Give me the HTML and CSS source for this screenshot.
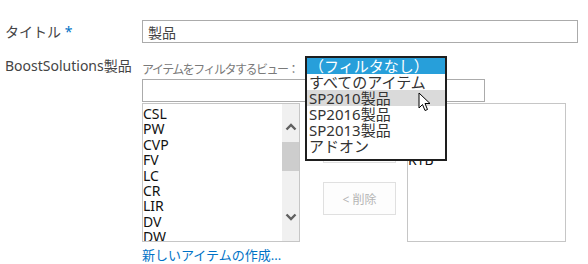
FILE: index.html
```html
<!DOCTYPE html>
<html lang="ja">
<head>
    <meta charset="UTF-8">
    <meta name="viewport" content="width=device-width, initial-scale=1.0">
    <title>アイテムの編集</title>
    <link rel="stylesheet" href="styles.css">
</head>
<body>
    <div class="form">
        <div class="row row-title">
            <label class="field-label" for="title">タイトル <span class="req">*</span></label>
            <div class="field">
                <input type="text" id="title" class="text-input title-input" value="製品">
            </div>
        </div>
        <div class="row row-lookup">
            <label class="field-label">BoostSolutions製品</label>
            <div class="field">
                <div class="filter-line">
                    <span class="filter-caption">アイテムをフィルタするビュー：</span>
                    <ul class="view-menu">
                        <li class="selected">（フィルタなし）</li>
                        <li>すべてのアイテム</li>
                        <li class="hover">SP2010製品</li>
                        <li>SP2016製品</li>
                        <li>SP2013製品</li>
                        <li>アドオン</li>
                    </ul>
                    <svg class="cursor" width="13" height="20" viewBox="0 0 13 20">
                        <path d="M1 1 L1 16 L4.5 12.5 L7 18.5 L9.5 17.5 L7 11.5 L12 11.5 Z" fill="#fff" stroke="#000" stroke-width="1" stroke-linejoin="round"/>
                    </svg>
                </div>
                <input type="text" class="text-input filter-input">
                <div class="picker">
                    <div class="listbox list-left">
                        <ul class="items">
                            <li>CSL</li>
                            <li>PW</li>
                            <li>CVP</li>
                            <li>FV</li>
                            <li>LC</li>
                            <li>CR</li>
                            <li>LIR</li>
                            <li>DV</li>
                            <li>DW</li>
                        </ul>
                        <div class="scrollbar">
                            <svg class="arrow" width="12" height="8" viewBox="0 0 12 8">
                                <path d="M1.5 6.5 L6 2 L10.5 6.5" fill="none" stroke="#606060" stroke-width="2.4"/>
                            </svg>
                            <div class="thumb"></div>
                            <svg class="arrow arrow-down" width="12" height="8" viewBox="0 0 12 8">
                                <path d="M1.5 1.5 L6 6 L10.5 1.5" fill="none" stroke="#606060" stroke-width="2.4"/>
                            </svg>
                        </div>
                    </div>
                    <div class="picker-buttons">
                        <button type="button" class="move-btn" disabled>追加 &gt;</button>
                        <button type="button" class="move-btn" disabled>&lt; 削除</button>
                    </div>
                    <div class="listbox list-right">
                        <ul class="items">
                            <li>SA</li>
                            <li>DL</li>
                            <li>CA</li>
                            <li>RTB</li>
                        </ul>
                    </div>
                </div>
                <a href="#" class="new-item">新しいアイテムの作成...</a>
            </div>
        </div>
    </div>
</body>
</html>
```

FILE: styles.css
```css
body {
    font-family: "Noto Sans", "Noto Sans CJK JP", sans-serif;
    background-color: #fff;
    color: #444;
    margin: 0;
    overflow: hidden;
}
.form {
    padding-top: 20px;
}
.row {
    display: grid;
    grid-template-columns: 142px 1fr;
}
.row-lookup {
    margin-top: 14px;
}
.field-label {
    padding-left: 5px;
    font-size: 14px;
    line-height: 18px;
}
.row-title .field-label {
    padding-top: 3px;
}
.req {
    color: #0072c6;
}
.text-input {
    display: block;
    box-sizing: border-box;
    height: 23px;
    border: 1px solid #ababab;
    padding: 0 5px;
    font-family: inherit;
    font-size: 14px;
    color: #444;
    margin: 0;
}
.title-input {
    width: 436px;
}
.filter-line {
    position: relative;
    height: 18px;
}
.filter-caption {
    font-size: 12px;
    letter-spacing: -1.5px;
    line-height: 18px;
    color: #7a7a7a;
    white-space: nowrap;
}
.view-menu {
    position: absolute;
    left: 163px;
    top: -1px;
    width: 142px;
    box-sizing: border-box;
    margin: 0;
    padding: 0 0 5px;
    list-style: none;
    border: 2px solid #1e1e1e;
    background: #fff;
    z-index: 2;
}
.view-menu li {
    height: 16px;
    line-height: 16px;
    font-size: 15px;
    padding-left: 2px;
    color: #333;
    white-space: nowrap;
}
.view-menu .selected {
    background: #279fda;
    color: #fff;
}
.view-menu .hover {
    background: #dadada;
}
.cursor {
    position: absolute;
    left: 276px;
    top: 35px;
    z-index: 3;
}
.filter-input {
    width: 343px;
    margin-top: 4px;
}
.picker {
    display: flex;
    align-items: flex-start;
    margin-top: 1px;
}
.listbox {
    box-sizing: border-box;
    height: 139px;
    border: 1px solid #c6c6c6;
    overflow: hidden;
    display: flex;
}
.list-left {
    width: 158px;
}
.list-right {
    width: 159px;
}
.items {
    flex: 1;
    margin: 0;
    padding: 2px 0 0;
    list-style: none;
    font-size: 14px;
    line-height: 15.4px;
    color: #111;
}
.scrollbar {
    width: 17px;
    background: #f0f0f0;
    display: flex;
    flex-direction: column;
    align-items: center;
}
.arrow {
    margin-top: 19px;
}
.thumb {
    width: 17px;
    height: 29px;
    margin-top: 11px;
    background: #cdcdcd;
}
.arrow-down {
    margin-top: 42px;
}
.picker-buttons {
    display: flex;
    flex-direction: column;
    gap: 19px;
    margin: 27px 11px 0 23px;
}
.move-btn {
    width: 73px;
    height: 33px;
    border: 1px solid #e0e0e0;
    background: #fdfdfd;
    color: #b4b4b4;
    font-family: inherit;
    font-size: 12px;
    padding: 0;
}
.new-item {
    display: block;
    margin-top: 5px;
    font-size: 13px;
    line-height: 16px;
    color: #0072c6;
    text-decoration: none;
}
```
